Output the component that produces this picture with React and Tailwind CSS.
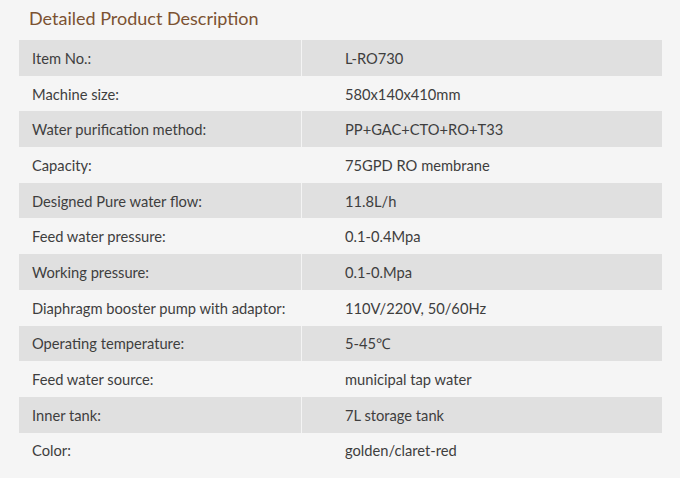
import React from 'react';

const rows = [
  ['Item No.:', 'L-RO730'],
  ['Machine size:', '580x140x410mm'],
  ['Water purification method:', 'PP+GAC+CTO+RO+T33'],
  ['Capacity:', '75GPD RO membrane'],
  ['Designed Pure water flow:', '11.8L/h'],
  ['Feed water pressure:', '0.1-0.4Mpa'],
  ['Working pressure:', '0.1-0.Mpa'],
  ['Diaphragm booster pump with adaptor:', '110V/220V, 50/60Hz'],
  ['Operating temperature:', '5-45℃'],
  ['Feed water source:', 'municipal tap water'],
  ['Inner tank:', '7L storage tank'],
  ['Color:', 'golden/claret-red'],
];

export default function App() {
  return (
    <div className="w-[680px] h-[478px] overflow-hidden bg-[#f5f5f5] pt-[5px] font-['Lato',sans-serif]">
      <h2 className="pl-[29px] h-[35px] text-[18px] leading-[26px] text-[#7b5232]">
        Detailed Product Description
      </h2>
      <div className="ml-[19px] w-[643px]">
        {rows.map(([label, value], i) => (
          <div
            key={label}
            className={`flex h-[35.7px] items-center text-[14.7px] text-[#3e3e3e] ${i % 2 === 0 ? 'bg-[#e0e0e0]' : ''}`}
          >
            <div className={`w-[283px] h-full flex items-center pl-[13px] ${i % 2 === 0 ? 'border-r border-[#f4f4f4]' : ''}`}>
              {label}
            </div>
            <div className="pl-[43px]">{value}</div>
          </div>
        ))}
      </div>
    </div>
  );
}
